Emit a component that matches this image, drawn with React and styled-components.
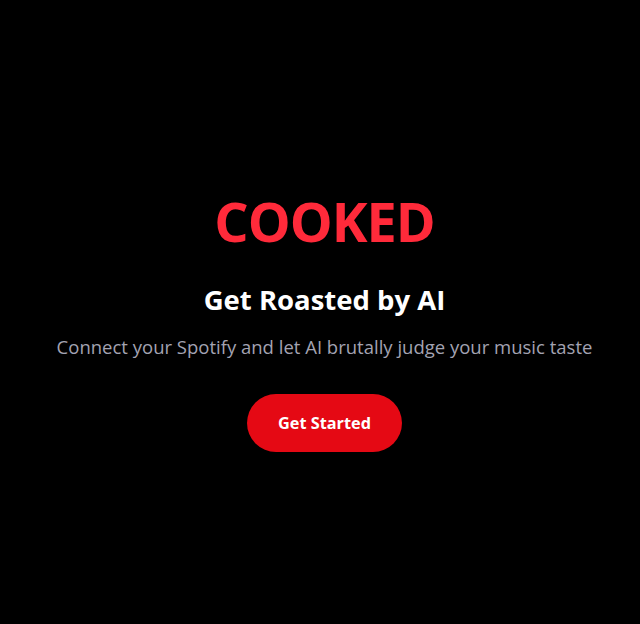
import React from "react";
import styled, { createGlobalStyle } from "styled-components";

const Global = createGlobalStyle`
  html, body { margin: 0; padding: 0; background: #000; }
  body { font-family: "Open Sans", "Noto Sans", sans-serif; }
`;

const Page = styled.main`
  min-height: 624px;
  box-sizing: border-box;
  display: flex;
  flex-direction: column;
  align-items: center;
  justify-content: center;
  background: #000;
  padding: 17px 0 0 9px;
  text-align: center;
`;

const Logo = styled.h1`
  margin: 0;
  font-size: 54px;
  font-weight: 700;
  color: #ff2a3a;
  line-height: 1.2;
  letter-spacing: -1px;
`;

const Title = styled.h2`
  margin: 28px 0 0;
  font-size: 27.5px;
  font-weight: 700;
  color: #fff;
  line-height: 1.3;
`;

const Subtitle = styled.p`
  margin: 16px 0 0;
  font-size: 18.5px;
  color: #a3a3b2;
  line-height: 1.5;
`;

const Button = styled.button`
  margin-top: 33px;
  width: 155px;
  height: 58px;
  border: none;
  border-radius: 29px;
  background: #e50914;
  color: #fff;
  font-family: inherit;
  font-size: 16.3px;
  font-weight: 700;
  cursor: pointer;
`;

export default function App() {
  return (
    <>
      <Global />
      <Page>
        <Logo>COOKED</Logo>
        <Title>Get Roasted by AI</Title>
        <Subtitle>Connect your Spotify and let AI brutally judge your music taste</Subtitle>
        <Button>Get Started</Button>
      </Page>
    </>
  );
}
